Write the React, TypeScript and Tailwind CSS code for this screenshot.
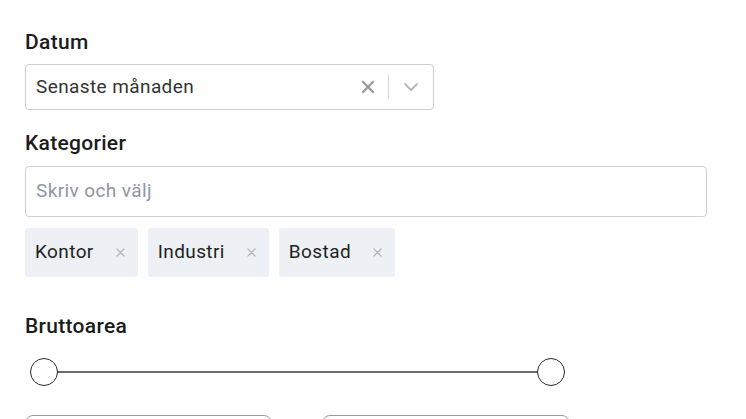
export default function App() {
  const chips = ['Kontor', 'Industri', 'Bostad'];

  return (
    <div className="min-h-screen bg-white px-[25px] pt-[30px] font-['Roboto',sans-serif] text-[#1c1c1c]">
      <label className="block text-[21px] font-medium leading-6 tracking-[0.3px]">Datum</label>
      <div className="mt-[10px] flex h-[46px] w-[409px] items-center rounded-[4px] border border-[#cfcfcf] pl-[10px] pr-[14px]">
        <span className="flex-1 text-[19px] tracking-[0.4px] text-[#333]">Senaste månaden</span>
        <svg width="14" height="14" viewBox="0 0 14 14" className="mr-[13px]">
          <path d="M2 2 L12 12 M12 2 L2 12" stroke="#9a9a9a" strokeWidth="2.4" strokeLinecap="round" />
        </svg>
        <div className="h-[24px] w-px bg-[#d4d4d4]" />
        <svg width="16" height="10" viewBox="0 0 16 10" className="ml-[14px]">
          <path d="M2 2 L8 8 L14 2" fill="none" stroke="#b8b8b8" strokeWidth="1.8" strokeLinecap="round" strokeLinejoin="round" />
        </svg>
      </div>

      <label className="mt-[21px] block text-[21px] font-medium leading-6 tracking-[0.3px]">Kategorier</label>
      <div className="mt-[11px] flex h-[51px] w-[682px] items-center rounded-[4px] border border-[#cfcfcf] px-[10px]">
        <input
          placeholder="Skriv och välj"
          className="w-full bg-transparent text-[19px] tracking-[0.4px] text-[#333] outline-none placeholder:text-[#8e96a4]"
        />
      </div>

      <div className="mt-[11px] flex gap-[10px]">
        {chips.map((c) => (
          <div key={c} className="flex h-[49px] items-center rounded-[3px] bg-[#edf1f5] pl-[10px] pr-[13px]">
            <span className="text-[19px] tracking-[0.4px] text-[#222]">{c}</span>
            <svg width="9" height="9" viewBox="0 0 9 9" className="ml-[22px]">
              <path d="M1 1 L8 8 M8 1 L1 8" stroke="#b5b5b5" strokeWidth="1.3" strokeLinecap="round" />
            </svg>
          </div>
        ))}
      </div>

      <label className="mt-[37px] block text-[21px] font-medium leading-6 tracking-[0.3px]">Bruttoarea</label>
      <div className="mt-[20px] w-[545px] px-[5px]">
        <div className="relative flex h-[28px] items-center">
          <div className="h-[2px] w-full bg-[#6b6b6b]" />
          <div className="absolute left-0 top-0 h-[28px] w-[28px] rounded-full border-[1.5px] border-[#2a2a2a] bg-white" />
          <div className="absolute right-0 top-0 h-[28px] w-[28px] rounded-full border-[1.5px] border-[#2a2a2a] bg-white" />
        </div>
      </div>

      <div className="mt-[29px] flex gap-[50px]">
        <div className="h-[46px] w-[247px] rounded-[8px] border border-[#9a9a9a]" />
        <div className="h-[46px] w-[248px] rounded-[8px] border border-[#9a9a9a]" />
      </div>
    </div>
  );
}
